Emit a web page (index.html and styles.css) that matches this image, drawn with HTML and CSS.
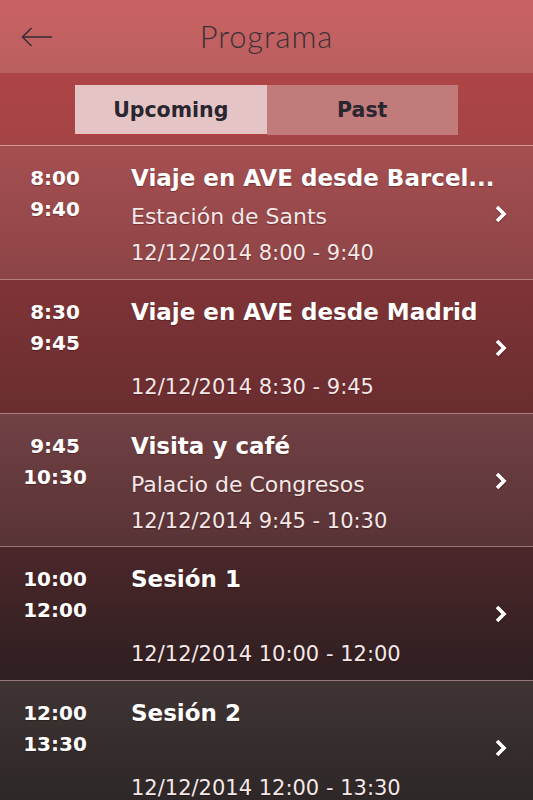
FILE: index.html
```html
<!DOCTYPE html>
<html lang="es">
<head>
<meta charset="utf-8">
<title>Programa</title>
<link rel="stylesheet" href="styles.css">
</head>
<body>
<div class="screen">
  <header class="topbar">
    <div class="back">
      <svg width="32" height="20" viewBox="0 0 32 20" aria-hidden="true">
        <polyline points="10.5,1 1.5,10 10.5,19" fill="none" stroke="#3b2e36" stroke-width="1.6"/>
        <line x1="1.5" y1="10" x2="31" y2="10" stroke="#3b2e36" stroke-width="1.6"/>
      </svg>
    </div>
    <h1 class="title">Programa</h1>
    <div></div>
  </header>
  <div class="segband">
    <div class="segment">
      <div class="seg seg-active">Upcoming</div>
      <div class="seg">Past</div>
    </div>
  </div>
  <ul class="list">
    <li class="row row1">
      <div class="times"><div>8:00</div><div>9:40</div></div>
      <div class="info">
        <div class="name">Viaje en AVE desde Barcel...</div>
        <div class="place">Estación de Sants</div>
        <div class="date">12/12/2014 8:00 - 9:40</div>
      </div>
      <svg class="chev" width="14" height="18" viewBox="0 0 14 18" aria-hidden="true"><polyline points="3,2 10,9 3,16" fill="none" stroke="#fff" stroke-width="3.6"/></svg>
    </li>
    <li class="row row2">
      <div class="times"><div>8:30</div><div>9:45</div></div>
      <div class="info">
        <div class="name">Viaje en AVE desde Madrid</div>
        <div class="place"></div>
        <div class="date">12/12/2014 8:30 - 9:45</div>
      </div>
      <svg class="chev" width="14" height="18" viewBox="0 0 14 18" aria-hidden="true"><polyline points="3,2 10,9 3,16" fill="none" stroke="#fff" stroke-width="3.6"/></svg>
    </li>
    <li class="row row3">
      <div class="times"><div>9:45</div><div>10:30</div></div>
      <div class="info">
        <div class="name">Visita y café</div>
        <div class="place">Palacio de Congresos</div>
        <div class="date">12/12/2014 9:45 - 10:30</div>
      </div>
      <svg class="chev" width="14" height="18" viewBox="0 0 14 18" aria-hidden="true"><polyline points="3,2 10,9 3,16" fill="none" stroke="#fff" stroke-width="3.6"/></svg>
    </li>
    <li class="row row4">
      <div class="times"><div>10:00</div><div>12:00</div></div>
      <div class="info">
        <div class="name">Sesión 1</div>
        <div class="place"></div>
        <div class="date">12/12/2014 10:00 - 12:00</div>
      </div>
      <svg class="chev" width="14" height="18" viewBox="0 0 14 18" aria-hidden="true"><polyline points="3,2 10,9 3,16" fill="none" stroke="#fff" stroke-width="3.6"/></svg>
    </li>
    <li class="row row5">
      <div class="times"><div>12:00</div><div>13:30</div></div>
      <div class="info">
        <div class="name">Sesión 2</div>
        <div class="place"></div>
        <div class="date">12/12/2014 12:00 - 13:30</div>
      </div>
      <svg class="chev" width="14" height="18" viewBox="0 0 14 18" aria-hidden="true"><polyline points="3,2 10,9 3,16" fill="none" stroke="#fff" stroke-width="3.6"/></svg>
    </li>
  </ul>
</div>
</body>
</html>
```

FILE: styles.css
```css
* { box-sizing: border-box; }
html, body { margin: 0; padding: 0; }
body {
  width: 533px;
  height: 800px;
  overflow: hidden;
  background: #2b2525;
  font-family: "DejaVu Sans", "Liberation Sans", sans-serif;
}
.screen { width: 533px; height: 800px; overflow: hidden; }

.topbar {
  height: 73px;
  display: grid;
  grid-template-columns: 1fr auto 1fr;
  align-items: center;
  background: linear-gradient(to bottom, #c96262, #bb5f5f);
}
.back { padding-left: 21px; padding-top: 0; display: flex; align-items: center; }
.back svg { display: block; }
.title {
  margin: 0 0 2px;
  font-family: Lato, "Open Sans", sans-serif;
  font-size: 31px;
  font-weight: 300;
  color: #3c3038;
  letter-spacing: 0.9px;
}

.segband {
  height: 73px;
  display: flex;
  align-items: center;
  justify-content: center;
  padding-top: 2px;
  background: linear-gradient(to bottom, #ae4546, #a44345);
  border-bottom: 1px solid #d39a9a;
}
.segment { display: flex; width: 383px; height: 50px; }
.seg {
  flex: 1;
  display: flex;
  align-items: center;
  justify-content: center;
  font-size: 20.5px;
  font-weight: 700;
  color: #2a2630;
  background: #c17b7b;
}
.seg-active {
  background: #e5c4c5;
  border-bottom: 1px solid #b73a3f;
}

.list { list-style: none; margin: 0; padding: 0; }
.row {
  height: 133.4px;
  display: flex;
  align-items: flex-start;
  border-top: 1px solid rgba(240, 190, 190, 0.55);
  color: #fff;
  text-shadow: 0 1px 1px rgba(40, 0, 0, 0.35);
}
.row:first-child { border-top: none; }
.row1 { background: linear-gradient(to bottom, #a64f51, #8c4446); }
.row2 { background: linear-gradient(to bottom, #803437, #692d30); }
.row3 { background: linear-gradient(to bottom, #724144, #583336); }
.row4 { background: linear-gradient(to bottom, #4c272a, #2e1f21); }
.row5 { background: linear-gradient(to bottom, #3f3434, #2c2626); }

.times {
  width: 110px;
  flex: none;
  padding-top: 17px;
  text-align: center;
  font-size: 20px;
  font-weight: 700;
  line-height: 31px;
}
.info {
  flex: 1;
  min-width: 0;
  margin-left: 21px;
  padding-top: 17px;
}
.name {
  font-size: 23px;
  font-weight: 700;
  line-height: 31px;
  white-space: nowrap;
}
.place {
  height: 37px;
  margin-top: 4px;
  font-size: 22px;
  line-height: 37px;
  color: #f4e8e8;
}
.date {
  height: 35px;
  margin-top: 1px;
  font-size: 21px;
  line-height: 35px;
  color: #f4e8e8;
}
.chev {
  flex: none;
  align-self: center;
  margin: 2px 25px 0 0;
  display: block;
  filter: drop-shadow(0 1px 1px rgba(40,0,0,0.35));
}
```
